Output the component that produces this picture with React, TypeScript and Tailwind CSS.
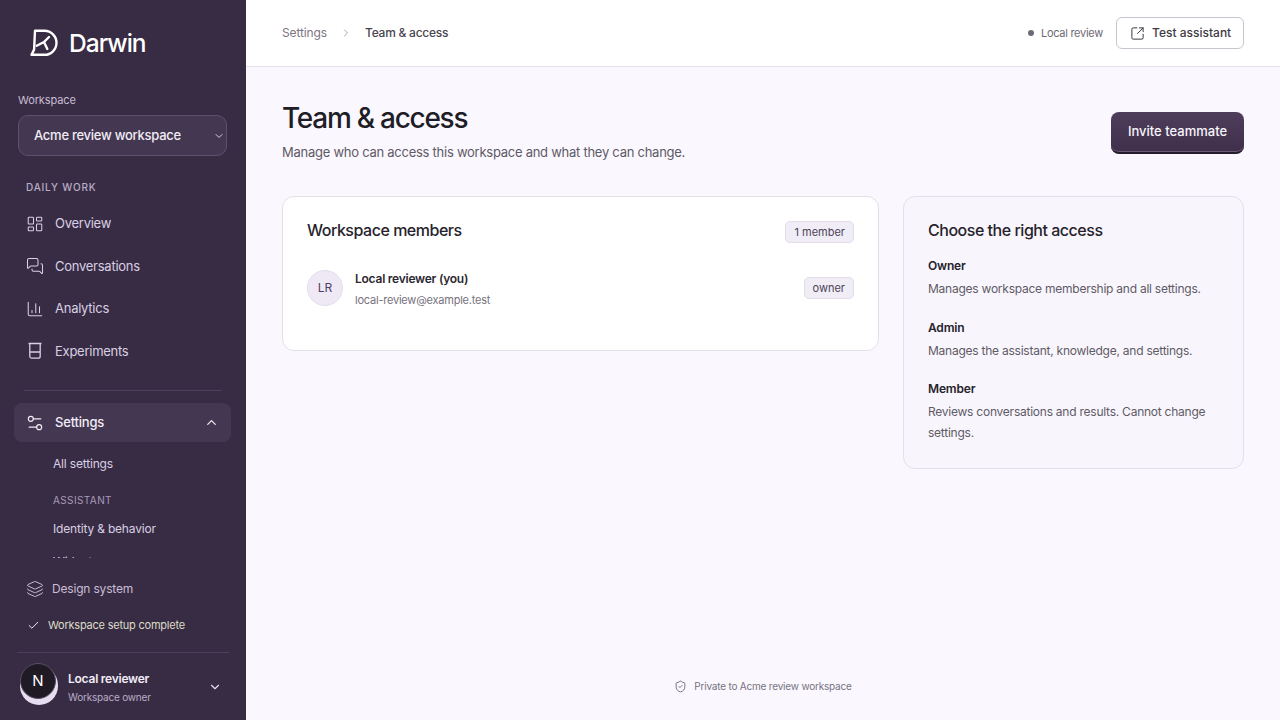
import {
  Check,
  ChartColumn,
  ChevronDown,
  ChevronRight,
  ChevronUp,
  Layers,
  LayoutDashboard,
  MessagesSquare,
  Settings2,
  ShieldCheck,
  SquareArrowOutUpRight,
} from "lucide-react";
import type { ReactNode } from "react";

const font = { fontFamily: "Inter, 'Liberation Sans', sans-serif" };

function BeakerIcon() {
  return (
    <svg width="18" height="18" viewBox="0 0 18 18" fill="none" stroke="currentColor" strokeWidth="1.3">
      <path d="M2.5 1.5h13M3.8 1.5v12.7a2 2 0 0 0 2 2h6.4a2 2 0 0 0 2-2V1.5M3.8 10h10.4" />
    </svg>
  );
}

function Logo() {
  return (
    <svg width="28" height="28" viewBox="0 0 28 28" fill="none" stroke="white" strokeWidth="2.4" strokeLinecap="round" strokeLinejoin="round">
      <path d="M5 1.8h9.5a12 12 0 0 1 0 24H1.5l2.6-5.2z" />
      <path d="M6.7 16.7l7.3-3.7 5-5M14 13l3.3 7" />
    </svg>
  );
}

function NavItem({ icon, label }: { icon: ReactNode; label: string }) {
  return (
    <div className="flex h-[42.5px] items-center gap-[10px] pl-[17px] text-[13px] tracking-[-0.02em] text-[#d8cfe2]">
      <span className="flex w-[20px] justify-center">{icon}</span>
      {label}
    </div>
  );
}

function Sidebar() {
  return (
    <aside className="flex h-[720px] w-[246px] shrink-0 flex-col bg-[#382c45]">
      <div className="flex h-[86px] items-center gap-[11px] pl-[30px]">
        <Logo />
        <span className="text-[24.5px] font-medium tracking-[-0.04em] text-white">Darwin</span>
      </div>
      <div className="px-[18px] pt-[7px]">
        <div className="text-[11px] leading-[14px] tracking-[-0.01em] text-[#c9bdd4]">Workspace</div>
        <div className="mt-[8px] flex h-[41px] w-[209px] items-center justify-between rounded-[10px] border border-[#5f5070] bg-[#443751] pl-[15px] pr-[1px] text-[13px] font-medium tracking-[-0.02em] text-[#f1ecf5]">
          Acme review workspace
          <ChevronDown size={12} className="text-[#d8cfe2]" />
        </div>
      </div>
      <div className="mt-[25px] pl-[26px] text-[10px] font-medium leading-[12px] tracking-[0.08em] text-[#b9acc6]">DAILY WORK</div>
      <div className="mt-[9.5px] flex flex-col px-[8px]">
        <NavItem icon={<LayoutDashboard size={18} strokeWidth={1.4} />} label="Overview" />
        <NavItem icon={<MessagesSquare size={18} strokeWidth={1.4} />} label="Conversations" />
        <NavItem icon={<ChartColumn size={18} strokeWidth={1.4} />} label="Analytics" />
        <NavItem icon={<BeakerIcon />} label="Experiments" />
      </div>
      <div className="mx-[24px] mt-[17.5px] h-px bg-[#4c3f5a]" />
      <div className="mx-[14px] mt-[12px] flex h-[39px] w-[217px] items-center gap-[10px] rounded-[8px] bg-[#443751] pl-[11px] pr-[12px] text-[13px] font-medium tracking-[-0.015em] text-[#f1ecf5]">
        <Settings2 size={20} strokeWidth={1.4} />
        <span className="flex-1">Settings</span>
        <ChevronUp size={15} strokeWidth={2} />
      </div>
      <div className="h-[116px] overflow-hidden pl-[53px] text-[12px] tracking-[-0.015em] text-[#d8cfe2]">
        <div className="mt-[14px] leading-[16px]">All settings</div>
        <div className="mt-[22px] text-[10px] leading-[12px] tracking-[0.04em] text-[#a99bb8]">ASSISTANT</div>
        <div className="mt-[15px] leading-[16px]">Identity &amp; behavior</div>
        <div className="mt-[17px] leading-[16px]">Widget</div>
      </div>
      <div className="mt-[13px] flex h-[36px] items-center gap-[8px] pl-[26px] text-[12px] tracking-[-0.015em] text-[#c9bdd4]">
        <Layers size={18} strokeWidth={1.3} />
        Design system
      </div>
      <div className="flex h-[36px] items-center gap-[8px] pl-[27px] text-[11px] tracking-[-0.02em] text-[#dcdcc4]">
        <Check size={13} strokeWidth={1.8} className="text-[#f1ecf5]" />
        Workspace setup complete
      </div>
      <div className="mx-[17px] mt-[9px] h-px bg-[#4c3f5a]" />
      <div className="flex flex-1 items-start pl-[20px] pr-[24px]">
        <div className="relative mt-[13px] h-[39px] w-[38px] shrink-0 rounded-full bg-[#e6def0]">
          <div className="absolute left-0 top-[-3px] flex h-[36px] w-[36px] items-center justify-center rounded-full border border-[#5a4e66] bg-[#1f1a24] text-[15px] text-white">N</div>
        </div>
        <div className="ml-[10px] flex-1 pt-[18px]">
          <div className="text-[12px] font-semibold leading-[16px] tracking-[-0.02em] text-[#f1ecf5]">Local reviewer</div>
          <div className="mt-[3px] text-[10px] leading-[14px] tracking-[-0.02em] text-[#b9acc6]">Workspace owner</div>
        </div>
        <ChevronDown size={14} className="mt-[27px] text-[#e5deec]" />
      </div>
    </aside>
  );
}

function Badge({ children }: { children: ReactNode }) {
  return (
    <span className="rounded-[5px] border border-[#e3dce9] bg-[#f1edf6] px-[8px] py-[3px] text-[11px] leading-[14px] text-[#4d4457]">{children}</span>
  );
}

function AccessRole({ title, children }: { title: string; children: ReactNode }) {
  return (
    <div>
      <div className="text-[12px] font-semibold leading-[16px] tracking-[-0.015em] text-[#26222b]">{title}</div>
      <p className="mt-[4px] text-[12px] leading-[21px] tracking-[-0.02em] text-[#5f5a66]">{children}</p>
    </div>
  );
}

export default function App() {
  return (
    <div style={font} className="flex h-[720px] w-[1280px] overflow-hidden bg-[#faf8fe]">
      <Sidebar />
      <main className="flex min-w-0 flex-1 flex-col">
        <header className="flex h-[67px] items-center border-b border-[#e7e3eb] bg-white px-[36px]">
          <span className="text-[12px] tracking-[-0.01em] text-[#7b7582]">Settings</span>
          <ChevronRight size={12} strokeWidth={1.5} className="ml-[13px] text-[#8d8793]" />
          <span className="ml-[13px] text-[12px] font-medium tracking-[-0.02em] text-[#4a4550]">Team &amp; access</span>
          <div className="ml-auto flex items-center">
            <span className="h-[6px] w-[6px] rounded-full bg-[#6f6a75]" />
            <span className="ml-[7px] text-[11px] tracking-[-0.025em] text-[#6f6a75]">Local review</span>
            <div className="ml-[13px] flex h-[32px] w-[128px] items-center gap-[7px] rounded-[6px] border border-[#c9c5ce] bg-white pl-[13px] text-[12px] font-medium text-[#3e3a44]">
              <SquareArrowOutUpRight size={15} strokeWidth={1.6} />
              Test assistant
            </div>
          </div>
        </header>
        <div className="flex flex-1 flex-col px-[36px]">
          <div className="flex items-start justify-between pt-[34px]">
            <div>
              <h1 className="text-[28px] font-medium leading-[34px] tracking-[-0.045em] text-[#211d26]">Team &amp; access</h1>
              <p className="mt-[8px] text-[13px] leading-[18px] tracking-[-0.02em] text-[#5f5a66]">Manage who can access this workspace and what they can change.</p>
            </div>
            <div className="mt-[11px] flex h-[42px] w-[133px] items-center justify-center rounded-[8px] border-b-2 border-[#241b2d] bg-gradient-to-b from-[#4e3e5c] to-[#3f2f4b] text-[13px] font-medium text-[#f8f5fb] shadow-[inset_0_-1px_0_#6b5a7a]">Invite teammate</div>
          </div>
          <div className="mt-[35px] flex items-start gap-[24px]">
            <section className="h-[155px] w-[597px] rounded-[12px] border border-[#e4e0ea] bg-white px-[24px] pt-[23px]">
              <div className="flex items-center justify-between">
                <h2 className="mb-[4px] text-[16px] font-medium leading-[20px] tracking-[-0.03em] text-[#26222b]">Workspace members</h2>
                <Badge>1 member</Badge>
              </div>
              <div className="mt-[26px] flex h-[36px] items-center">
                <div className="flex h-[36px] w-[36px] items-center justify-center rounded-full border border-[#e3dcec] bg-[#efe9f6] text-[12px] text-[#4f3f66]">LR</div>
                <div className="ml-[12px] flex-1 pt-[2px]">
                  <div className="text-[12px] font-semibold leading-[16px] tracking-[-0.02em] text-[#2c2831]">Local reviewer (you)</div>
                  <div className="mt-[6px] text-[11px] leading-[14px] tracking-[-0.02em] text-[#77727e]">local-review@example.test</div>
                </div>
                <Badge>owner</Badge>
              </div>
            </section>
            <section className="h-[273px] w-[341px] rounded-[12px] border border-[#e4e0ea] bg-[#f8f6fc] px-[24px] pt-[23px]">
              <h2 className="text-[16px] font-medium leading-[20px] tracking-[-0.03em] text-[#26222b]">Choose the right access</h2>
              <div className="mt-[18px] flex flex-col gap-[20.5px]">
                <AccessRole title="Owner">Manages workspace membership and all settings.</AccessRole>
                <AccessRole title="Admin">Manages the assistant, knowledge, and settings.</AccessRole>
                <AccessRole title="Member">Reviews conversations and results. Cannot change settings.</AccessRole>
              </div>
            </section>
          </div>
          <footer className="mt-auto flex h-[67px] items-center justify-center gap-[7px] pb-[1px] text-[10px] tracking-[-0.02em] text-[#77727e]">
            <ShieldCheck size={13} strokeWidth={1.5} className="text-[#5f5a66]" />
            Private to Acme review workspace
          </footer>
        </div>
      </main>
    </div>
  );
}
